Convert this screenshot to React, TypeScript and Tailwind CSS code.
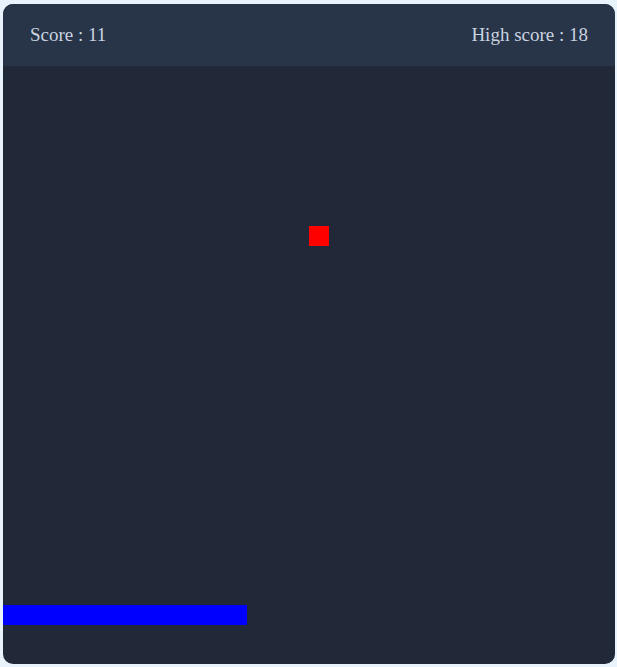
import React from "react";

const snake = { x: 0, y: 539, w: 244, h: 20 };
const food = { x: 306, y: 160 };

export default function App() {
  return (
    <div className="min-h-screen bg-[#e9f3fc] pl-[3px] pt-[4px]">
      <div
        className="flex h-[660px] w-[612px] flex-col overflow-hidden rounded-[10px] bg-[#212837]"
        style={{ fontFamily: '"Liberation Serif", "Times New Roman", serif' }}
      >
        <header className="flex h-[62px] shrink-0 items-center justify-between bg-[#283548] px-[27px] text-[19px] text-[#c9d3e0]">
          <span>Score : 11</span>
          <span>High score : 18</span>
        </header>

        <div className="relative flex-1">
          <div
            className="absolute h-[20px] w-[20px] bg-[#ff0000]"
            style={{ left: food.x, top: food.y }}
          />
          <div
            className="absolute bg-[#0000ff]"
            style={{ left: snake.x, top: snake.y, width: snake.w, height: snake.h }}
          />
        </div>
      </div>
    </div>
  );
}
